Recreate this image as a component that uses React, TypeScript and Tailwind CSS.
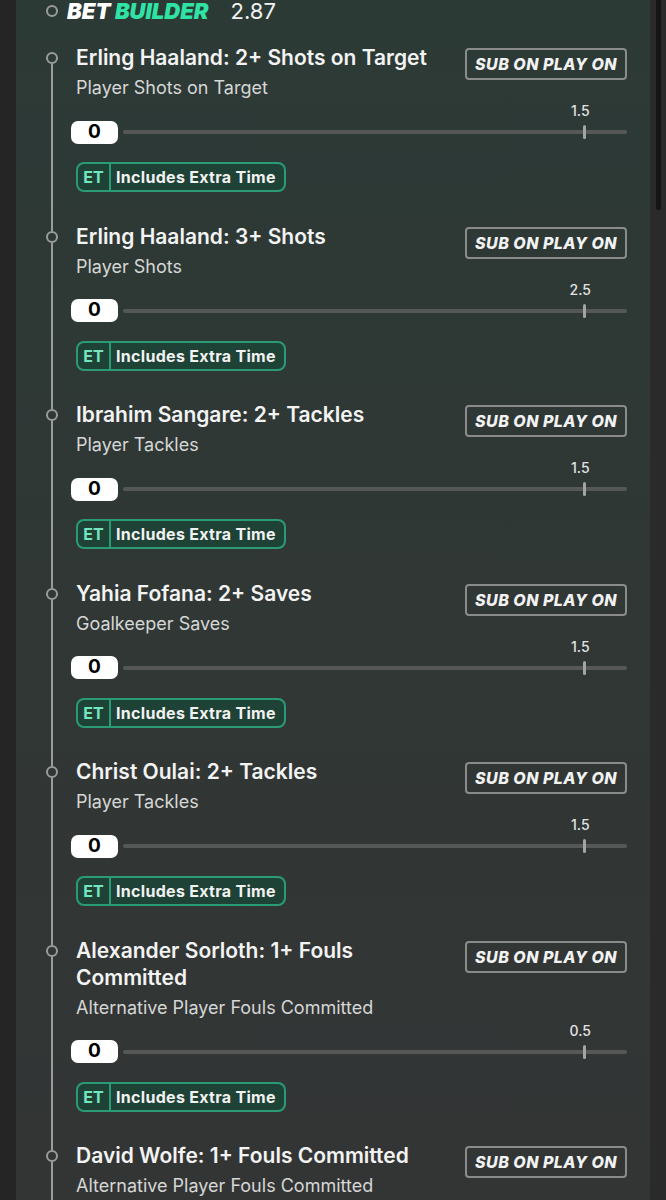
import React from "react";

type Leg = { title: string; market: string; line: string };

const legs: Leg[] = [
  { title: "Erling Haaland: 2+ Shots on Target", market: "Player Shots on Target", line: "1.5" },
  { title: "Erling Haaland: 3+ Shots", market: "Player Shots", line: "2.5" },
  { title: "Ibrahim Sangare: 2+ Tackles", market: "Player Tackles", line: "1.5" },
  { title: "Yahia Fofana: 2+ Saves", market: "Goalkeeper Saves", line: "1.5" },
  { title: "Christ Oulai: 2+ Tackles", market: "Player Tackles", line: "1.5" },
  { title: "Alexander Sorloth: 1+ Fouls Committed", market: "Alternative Player Fouls Committed", line: "0.5" },
  { title: "David Wolfe: 1+ Fouls Committed", market: "Alternative Player Fouls Committed", line: "0.5" },
];

function Dot() {
  return <div className="w-[12px] h-[12px] rounded-full border-2 border-[#9a9c9b] shrink-0" />;
}

function LegRow({ leg, first }: { leg: Leg; first: boolean }) {
  return (
    <div className="flex">
      {/* timeline */}
      <div className="w-6 flex flex-col items-center shrink-0">
        <div className={`w-[2px] h-[8px] ${first ? "" : "bg-[#9a9c9b]"}`} />
        <Dot />
        <div className="w-[2px] flex-1 bg-[#9a9c9b]" />
      </div>

      {/* content */}
      <div className="flex-1 ml-3 pb-[30.5px]">
        <div className="flex items-start gap-4">
          <div className="flex-1">
            <div className="text-[21px] leading-[27px] font-semibold text-[#f3f3f3]">{leg.title}</div>
            <div className="mt-1.5 text-[18px] leading-[22px] text-[#d6d7d6]">{leg.market}</div>
          </div>
          <div className="mt-1 w-[162px] h-8 shrink-0 border-2 border-[#8a8c8b] rounded-[4px] flex items-center justify-center text-[16px] font-extrabold italic tracking-[0.5px] text-[#f2f2f2]">
            SUB ON PLAY ON
          </div>
        </div>

        {/* slider */}
        <div className="mt-1 -ml-[5px] flex flex-col">
          <div className="relative h-4">
            <span className="absolute left-[91.6%] -translate-x-1/2 top-0 text-[14px] leading-4 font-medium text-[#e3e3e3]">
              {leg.line}
            </span>
          </div>
          <div className="mt-px flex items-center h-6">
            <div className="w-[47px] h-[23px] rounded-[7px] bg-white flex items-center justify-center text-[19px] font-bold text-black">
              0
            </div>
            <div className="relative flex-1 ml-[5px] h-1 rounded-full bg-[#555857]">
              <div className="absolute left-[91.3%] -top-[5px] w-[3px] h-[14px] rounded-sm bg-[#a3a5a4]" />
            </div>
          </div>
        </div>

        {/* extra time badge */}
        <div className="mt-[18px] inline-flex h-[30px] items-stretch rounded-lg border-2 border-[#2a9a77] bg-[#1e4236]">
          <span className="w-[33px] flex items-center justify-center border-r-2 border-[#2a9a77] text-[16px] font-bold text-[#74e5bf]">
            ET
          </span>
          <span className="px-[5px] pr-[8px] flex items-center text-[16px] font-bold tracking-[0.3px] text-[#f1f1f1]">
            Includes Extra Time
          </span>
        </div>
      </div>
    </div>
  );
}

export default function App() {
  return (
    <div className="flex h-[1200px] overflow-hidden bg-[#252525] font-['Inter',sans-serif]">
      <div className="w-4 shrink-0" />

      <div className="flex-1 bg-gradient-to-b from-[#2c3a36] via-[#303735] to-[#333535] pl-6 pr-[23px]">
        {/* header */}
        <div className="flex items-center h-[22px]">
          <div className="w-6 flex justify-center shrink-0">
            <Dot />
          </div>
          <div className="ml-[3px] text-[22px] font-black italic leading-[22px]">
            <span className="text-white">BET </span>
            <span className="text-[#2fe3a5]">BUILDER</span>
          </div>
          <div className="ml-[22px] text-[22px] leading-[22px] text-[#f2f2f2]">2.87</div>
        </div>

        <div className="mt-[22px]">
          {legs.map((leg, i) => (
            <LegRow key={i} leg={leg} first={i === 0} />
          ))}
        </div>
      </div>

      {/* scrollbar strip */}
      <div className="w-4 shrink-0 bg-[#2a2a2a] pl-[6px]">
        <div className="w-[5px] h-[210px] rounded-b-full bg-[#151515]" />
      </div>
    </div>
  );
}
